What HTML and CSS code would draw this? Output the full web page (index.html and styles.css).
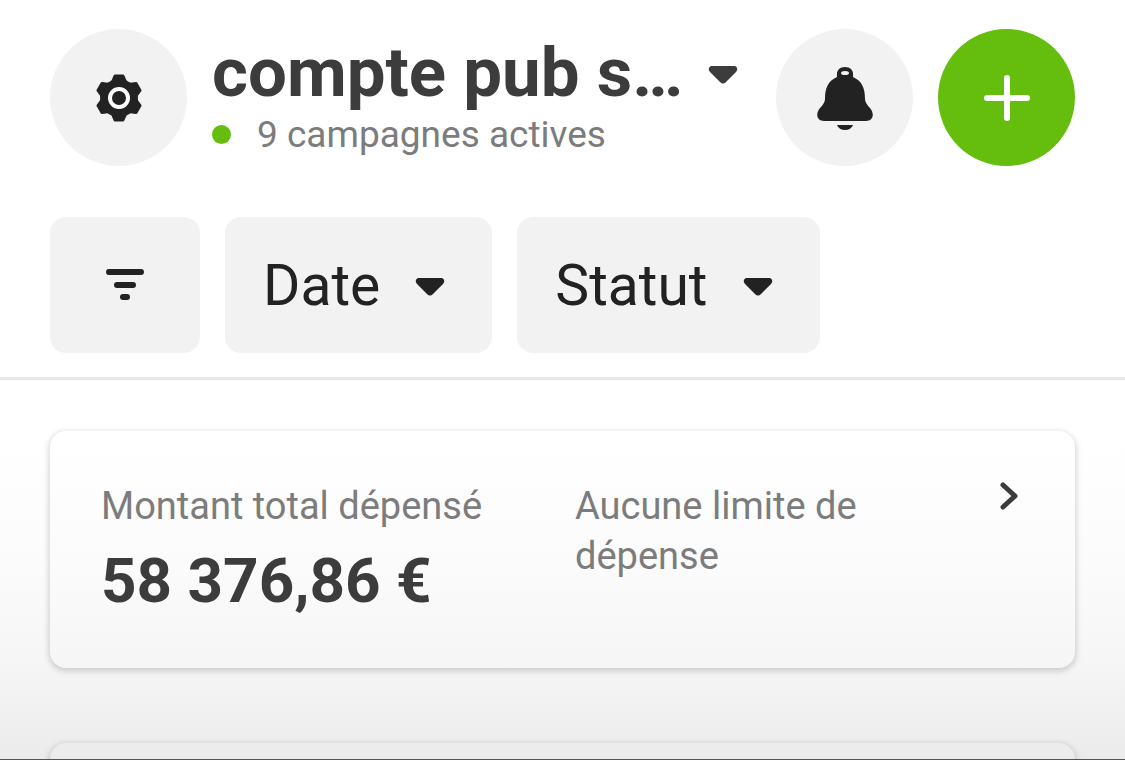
FILE: index.html
```html
<!DOCTYPE html>
<html lang="fr">
<head>
<meta charset="utf-8">
<meta name="viewport" content="width=device-width, initial-scale=1">
<title>Compte publicitaire</title>
<link rel="stylesheet" href="styles.css">
</head>
<body>
<header class="header">
  <div class="topbar">
    <button class="round" type="button" aria-label="Paramètres">
      <svg width="48" height="48" viewBox="0 0 48 48" aria-hidden="true">
        <g fill="#222">
          <circle cx="24" cy="24" r="19"/>
          <path id="teeth" stroke="#222" stroke-width="3" stroke-linejoin="round" d="M20 2H28L31 9V39L28 46H20L17 39V9Z"/>
          <use href="#teeth" transform="rotate(60 24 24)"/>
          <use href="#teeth" transform="rotate(120 24 24)"/>
        </g>
        <circle cx="24" cy="24" r="9" fill="#222" stroke="#fff" stroke-width="4"/>
      </svg>
    </button>
    <div class="account">
      <button class="account-name" type="button">
        <span>compte pub s…</span>
        <svg class="caret" width="30" height="24" viewBox="0 0 30 24" aria-hidden="true"><path d="M3 5H27Q31 7 28 11L18 21Q15 24 12 21L2 11Q-1 7 3 5Z"/></svg>
      </button>
      <p class="status"><span class="dot"></span>9 campagnes actives</p>
    </div>
    <button class="round" type="button" aria-label="Notifications">
      <svg width="58" height="64" viewBox="0 0 58 64" aria-hidden="true">
        <path fill="#222" d="M21 11Q20 1 29 1T37 11C46 15 49 22 49 33Q49 37 54 42C59 48 57 55 50 55H8C1 55-1 48 4 42Q9 37 9 33C9 22 12 15 21 11Z"/>
        <ellipse cx="29" cy="7" rx="4" ry="2" fill="#f2f2f2"/>
        <path fill="#222" d="M21 59H37Q35 64 29 64T21 59Z"/>
      </svg>
    </button>
    <button class="round add" type="button" aria-label="Créer">
      <svg width="46" height="46" viewBox="0 0 46 46" aria-hidden="true"><path d="M23 3V43M3 23H43" stroke="#fff" stroke-width="6" stroke-linecap="round"/></svg>
    </button>
  </div>
  <div class="filters">
    <button class="chip icon-chip" type="button" aria-label="Filtrer">
      <svg width="38" height="32" viewBox="0 0 38 32" aria-hidden="true"><path fill="none" stroke="#222" stroke-width="6" stroke-linecap="round" d="M3 3H35M11 16H27M17 28H21"/></svg>
    </button>
    <button class="chip" type="button">Date
      <svg class="caret" width="30" height="24" viewBox="0 0 30 24" aria-hidden="true"><path d="M3 5H27Q31 7 28 11L18 21Q15 24 12 21L2 11Q-1 7 3 5Z"/></svg>
    </button>
    <button class="chip" type="button">Statut
      <svg class="caret" width="30" height="24" viewBox="0 0 30 24" aria-hidden="true"><path d="M3 5H27Q31 7 28 11L18 21Q15 24 12 21L2 11Q-1 7 3 5Z"/></svg>
    </button>
  </div>
</header>
<main class="content">
  <section class="card">
    <div class="spent">
      <p class="label">Montant total dépensé</p>
      <p class="amount">58 376,86 €</p>
    </div>
    <p class="label limit">Aucune limite de dépense</p>
    <button class="more" type="button" aria-label="Détails">
      <svg width="20" height="30" viewBox="0 0 20 30" aria-hidden="true"><path d="M4 4L16 15L4 26" fill="none" stroke="#3b3b3b" stroke-width="5" stroke-linecap="round" stroke-linejoin="round"/></svg>
    </button>
  </section>
  <section class="card"></section>
</main>
</body>
</html>
```
FILE: styles.css
```css
* { box-sizing: border-box; }

body {
  margin: 0;
  height: 100vh;
  display: flex;
  flex-direction: column;
  border-bottom: 1px solid #555;
  background: #fff;
  color: #3c3c3c;
  font-family: Roboto, "Liberation Sans", sans-serif;
}

p { margin: 0; }

button {
  padding: 0;
  border: 0;
  background: none;
  color: inherit;
  font: inherit;
  cursor: pointer;
}

.header {
  flex: none;
  padding: 29px 50px 24px;
  border-bottom: 3px solid #e6e6e6;
}

.topbar {
  display: flex;
  align-items: center;
  gap: 25px;
}

.round {
  flex: none;
  display: flex;
  align-items: center;
  justify-content: center;
  width: 137px;
  height: 137px;
  border-radius: 50%;
  background: #f2f2f2;
}

.add { background: #65be0d; }

.account { flex: 1; min-width: 0; }

.account-name {
  display: flex;
  align-items: center;
  gap: 25px;
  font-size: 69px;
  font-weight: 700;
  line-height: 74px;
  white-space: nowrap;
}

.caret { flex: none; fill: currentColor; }

.status {
  display: flex;
  align-items: center;
  gap: 26px;
  color: #7c7c7c;
  font-size: 37px;
  line-height: 50px;
}

.dot {
  width: 19px;
  height: 19px;
  border-radius: 50%;
  background: #65be0d;
}

.filters {
  display: flex;
  gap: 25px;
  margin-top: 51px;
}

.chip {
  display: flex;
  align-items: center;
  justify-content: center;
  gap: 35px;
  height: 136px;
  padding: 0 47px 0 38px;
  border-radius: 16px;
  background: #f2f2f2;
  color: #222;
  font-size: 57px;
}

.icon-chip { width: 150px; padding: 0; }

.content {
  flex: 1;
  min-height: 0;
  overflow: hidden;
  display: flex;
  flex-direction: column;
  gap: 75px;
  padding: 51px 50px 0;
  background: linear-gradient(#fff 15%, #fbfbfb 50%, #f6f6f6 74%, #ebebeb);
}

.card {
  flex: none;
  display: grid;
  grid-template-columns: 474px 1fr auto;
  align-items: start;
  min-height: 237px;
  padding: 50px 56px 48px 51px;
  border-radius: 16px;
  box-shadow: 0 2px 6px 1px rgba(0, 0, 0, 0.18);
}

.label {
  color: #7c7c7c;
  font-size: 38px;
  line-height: 50px;
}

.limit { max-width: 320px; }

.amount {
  font-size: 62px;
  font-weight: 700;
  line-height: 72px;
  margin-top: 14px;
}

.more { display: flex; }
```
